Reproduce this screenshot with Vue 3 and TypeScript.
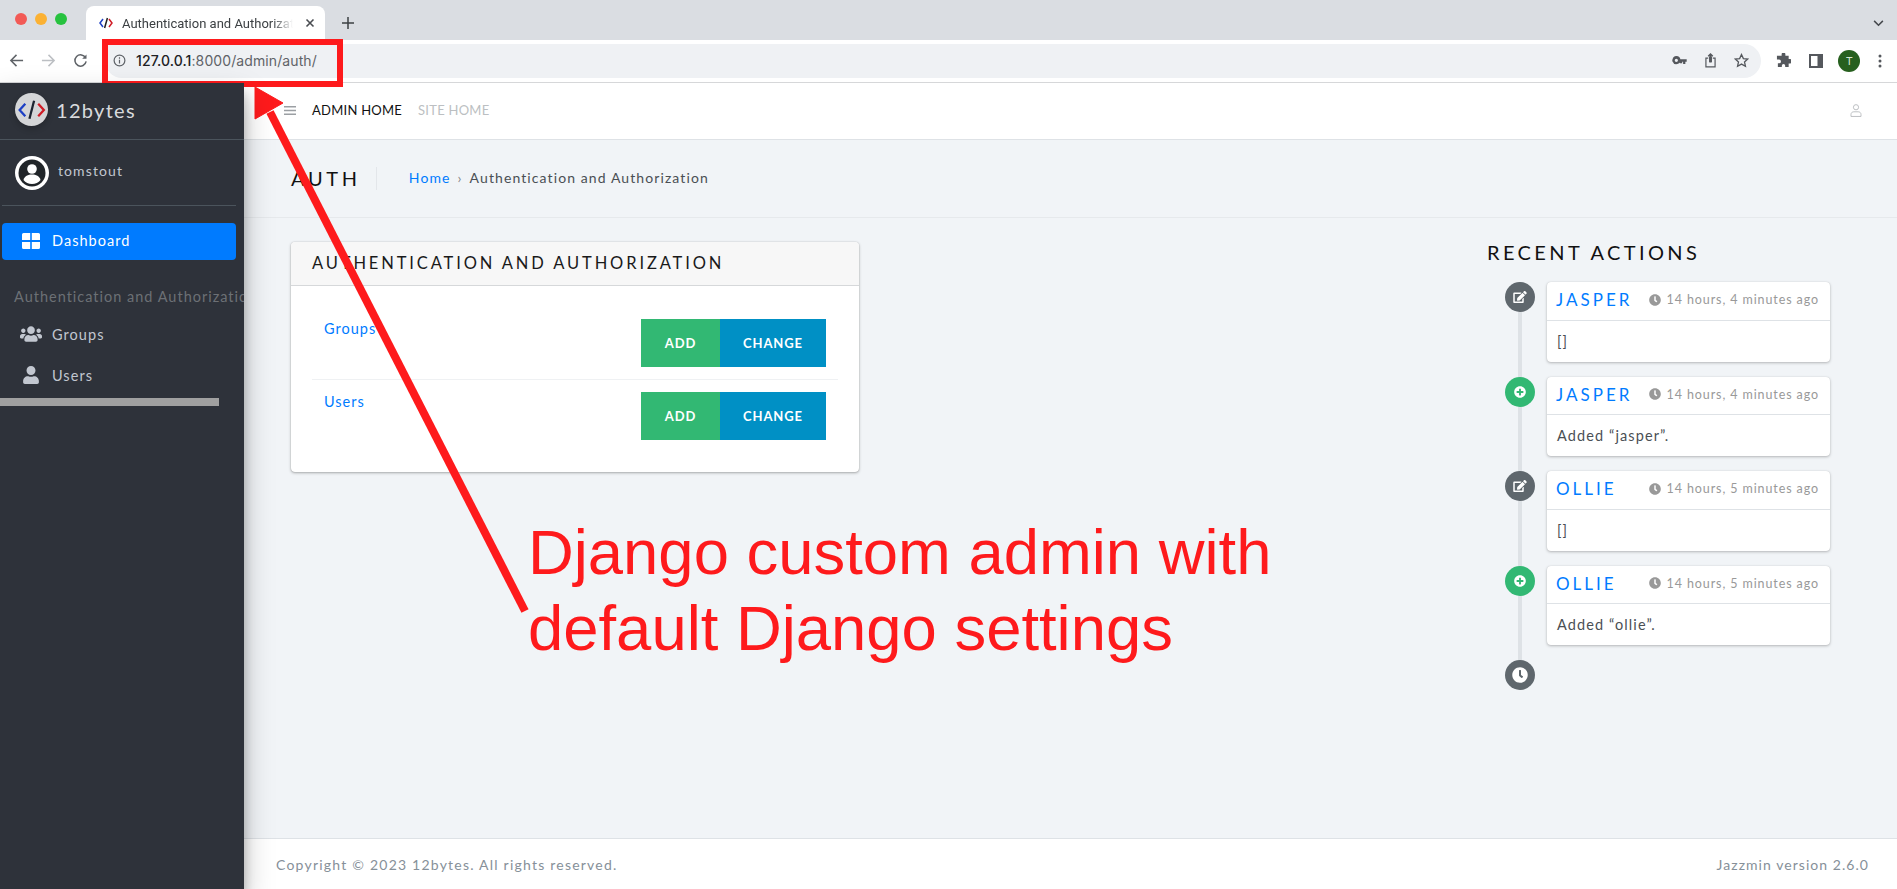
<script setup lang="ts">
interface Action { name: string; time: string; body: string; kind: 'edit' | 'add' }
const actions: Action[] = [
  { name: 'JASPER', time: '14 hours, 4 minutes ago', body: '[]', kind: 'edit' },
  { name: 'JASPER', time: '14 hours, 4 minutes ago', body: 'Added “jasper”.', kind: 'add' },
  { name: 'OLLIE', time: '14 hours, 5 minutes ago', body: '[]', kind: 'edit' },
  { name: 'OLLIE', time: '14 hours, 5 minutes ago', body: 'Added “ollie”.', kind: 'add' },
]
const models: string[] = ['Groups', 'Users']
const clock = 'M256,8C119,8,8,119,8,256S119,504,256,504,504,393,504,256,393,8,256,8Zm92.49,313h0l-20,25a16,16,0,0,1-22.49,2.5h0l-67-49.72a40,40,0,0,1-15-31.23V112a16,16,0,0,1,16-16h32a16,16,0,0,1,16,16V256l58,42.5A16,16,0,0,1,348.49,321Z'
const edit = 'M402.6 83.2l90.2 90.2c3.8 3.8 3.8 10 0 13.8L274.4 405.6l-92.8 10.3c-12.4 1.4-22.9-9.1-21.5-21.5l10.3-92.8L388.8 83.2c3.8-3.8 10-3.8 13.8 0zm162-22.9l-48.8-48.8c-15.2-15.2-39.9-15.2-55.2 0l-35.4 35.4c-3.8 3.8-3.8 10 0 13.8l90.2 90.2c3.8 3.8 10 3.8 13.8 0l35.4-35.4c15.2-15.3 15.2-40 0-55.2zM384 346.2V448H64V128h229.8c3.2 0 6.2-1.3 8.5-3.5l40-40c7.6-7.6 2.2-20.5-8.5-20.5H48C21.5 64 0 85.5 0 112v352c0 26.5 21.5 48 48 48h352c26.5 0 48-21.5 48-48V306.2c0-10.7-12.9-16-20.5-8.5l-40 40c-2.2 2.3-3.5 5.3-3.5 8.5z'
const plus = 'M256 8C119 8 8 119 8 256s111 248 248 248 248-111 248-248S393 8 256 8zm144 276c0 6.6-5.4 12-12 12h-92v92c0 6.6-5.4 12-12 12h-56c-6.6 0-12-5.4-12-12v-92h-92c-6.6 0-12-5.4-12-12v-56c0-6.6 5.4-12 12-12h92v-92c0-6.6 5.4-12 12-12h56c6.6 0 12 5.4 12 12v92h92c6.6 0 12 5.4 12 12v56z'
</script>

<template>
  <div class="page">
    <div class="tabstrip">
      <div class="lights">
        <span class="light red"></span><span class="light amber"></span><span class="light green"></span>
      </div>
      <div class="tab">
        <svg class="favicon" viewBox="0 0 14 14" width="14" height="14" fill="none" stroke-width="1.5">
          <path d="M4 3 1 7l3 4" stroke="#1c3fc4" />
          <path d="M8.400 2 5.600 12" stroke="#222" />
          <path d="m10 3 3 4-3 4" stroke="#d01c26" />
        </svg>
        <span class="tab-title">Authentication and Authorization</span>
        <svg class="tab-close" viewBox="0 0 10 10" width="10" height="10" stroke="#4a4d52" stroke-width="1.6">
          <path d="m1.500 1.500 7 7m0-7-7 7" />
        </svg>
      </div>
      <svg class="newtab" viewBox="0 0 12 12" width="12" height="12" stroke="#3c4043" stroke-width="1.5">
        <path d="M6 0v12M0 6h12" />
      </svg>
      <svg class="chev" viewBox="0 0 12 8" width="11" height="7" fill="none" stroke="#45484d" stroke-width="1.7">
        <path d="m1 1 5 5 5-5" />
      </svg>
    </div>

    <div class="toolbar">
      <svg class="nav-ic" viewBox="0 0 16 16" width="15" height="15" fill="none" stroke="#5f6368" stroke-width="1.6">
        <path d="M15 8H2M8 2 2 8l6 6" />
      </svg>
      <svg class="nav-ic" viewBox="0 0 16 16" width="15" height="15" fill="none" stroke="#bcbfc3" stroke-width="1.6">
        <path d="M1 8h13M8 2l6 6-6 6" />
      </svg>
      <svg class="nav-ic" viewBox="0 0 16 16" width="15" height="15" fill="none" stroke="#5f6368" stroke-width="1.6">
        <path d="M13.400 5.200A6 6 0 1 0 14 9" />
        <path d="M14.400 1.600v4.600H9.800" fill="#5f6368" stroke="none" />
      </svg>
      <div class="omnibox">
        <svg viewBox="0 0 14 14" width="13" height="13" fill="none" stroke="#5f6368" stroke-width="1.3">
          <circle cx="7" cy="7" r="5.800" />
          <path d="M7 6.200v4M7 3.600v1.400" />
        </svg>
        <span class="url"><b>127.0.0.1</b>:8000/admin/auth/</span>
        <div class="omni-right">
          <svg viewBox="0 0 16 10" width="15" height="9" fill="#55585d">
            <path d="M4.500 0a4.500 4.500 0 1 1-4.200 6H0V4h.3A4.500 4.500 0 0 1 4.500 0Zm0 3a1.800 1.800 0 1 0 0 3.600 1.800 1.800 0 0 0 0-3.600ZM8 3.500h8v3h-1.500V9H12V6.500h-1V8H8.500Z" />
          </svg>
          <svg viewBox="0 0 12 16" width="11" height="15" fill="none" stroke="#55585d" stroke-width="1.3">
            <path d="M3.500 5.500H1v9.500h10V5.500H8.500" />
            <path d="M6 10V1M3.500 3.400 6 1l2.500 2.400" stroke-width="1.6" />
            <path d="M4.400 3.500h3.200V10H4.400Z" fill="#55585d" stroke="none" />
          </svg>
          <svg viewBox="0 0 16 16" width="15" height="15" fill="none" stroke="#55585d" stroke-width="1.4">
            <path d="m8 1.600 2 4.300 4.600.5-3.400 3.100 1 4.600L8 11.800l-4.200 2.300 1-4.600L1.400 6.400 6 5.900Z" />
          </svg>
        </div>
      </div>
      <div class="browser-right">
        <svg viewBox="0 0 16 16" width="15" height="15" fill="#55585d">
          <path d="M6 1.500a2 2 0 0 1 4 0V3h3.500v3.500H15a2.300 2.300 0 0 1 0 4.600h-1.500V15H9.800v-1.500a1.800 1.800 0 0 0-3.600 0V15H2v-4h1.300a2 2 0 0 0 0-4H1V3h5Z" />
        </svg>
        <svg viewBox="0 0 14 14" width="14" height="14" fill="none" stroke="#55585d">
          <path d="M0 0h14v14H0Z" fill="#55585d" stroke="none" />
          <path d="M2 2h6.500v10H2Z" fill="#fff" stroke="none" />
        </svg>
        <span class="avatar">T</span>
        <svg viewBox="0 0 4 14" width="4" height="14" fill="#55585d">
          <circle cx="2" cy="2" r="1.500" /><circle cx="2" cy="7" r="1.500" /><circle cx="2" cy="12" r="1.500" />
        </svg>
      </div>
    </div>

    <div class="app">
      <aside class="sidebar">
        <div class="brand">
          <span class="brand-logo">
            <svg viewBox="0 0 32 32" width="33" height="33" fill="none" stroke-width="2.200">
              <path d="M10 10.500 4.500 16.500l5.500 6" stroke="#1c3fc4" />
              <path d="M18.500 7.500 14 25" stroke="#1c2430" />
              <path d="m22.500 10.500 5.500 6-5.500 6" stroke="#d01c26" />
            </svg>
          </span>
          <span class="brand-text">12bytes</span>
        </div>
        <div class="user-panel">
          <svg class="user-pic" viewBox="0 0 34 34" width="34" height="34">
            <circle cx="17" cy="17" r="17" fill="#fff" />
            <circle cx="17" cy="17" r="13.500" fill="#212529" />
            <circle cx="17" cy="13" r="4.800" fill="#fff" />
            <path d="M8.500 24c1-4 4.500-5.500 8.500-5.500s7.500 1.500 8.500 5.500c-2 2.500-5 4-8.500 4s-6.500-1.500-8.500-4Z" fill="#fff" />
          </svg>
          <span class="user-name">tomstout</span>
        </div>
        <nav class="side-nav">
          <a class="side-link active">
            <svg class="ic-dash" viewBox="0 0 18 16" width="18" height="16" fill="#fff">
              <path d="M0 1.500A1.500 1.500 0 0 1 1.500 0h6.700v7H0ZM9.800 0h6.700A1.500 1.500 0 0 1 18 1.500V7H9.800ZM0 9h8.200v7H1.500A1.500 1.500 0 0 1 0 14.500ZM9.800 9H18v5.500a1.500 1.500 0 0 1-1.500 1.500H9.800Z" />
            </svg>
            <span>Dashboard</span>
          </a>
          <div class="side-head">Authentication and Authorization</div>
          <a class="side-link">
            <svg class="ic-side" viewBox="0 0 640 512" width="22" height="18" fill="#c2c7d0">
              <path d="M96 224c35.300 0 64-28.700 64-64s-28.700-64-64-64-64 28.700-64 64 28.700 64 64 64zm448 0c35.300 0 64-28.700 64-64s-28.700-64-64-64-64 28.700-64 64 28.700 64 64 64zm32 32h-64c-17.600 0-33.500 7.100-45.100 18.600 40.300 22.100 68.900 62 75.100 109.400h66c17.700 0 32-14.300 32-32v-32c0-35.300-28.700-64-64-64zm-256 0c61.900 0 112-50.100 112-112S381.900 32 320 32 208 82.100 208 144s50.100 112 112 112zm76.800 32h-8.300c-20.800 10-43.900 16-68.500 16s-47.600-6-68.500-16h-8.300C179.600 288 128 339.600 128 403.200V432c0 26.500 21.500 48 48 48h288c26.500 0 48-21.500 48-48v-28.800c0-63.600-51.600-115.200-115.200-115.200zm-223.700-13.400C161.500 263.100 145.600 256 128 256H64c-35.300 0-64 28.700-64 64v32c0 17.700 14.300 32 32 32h65.900c6.300-47.400 34.900-87.300 75.200-109.400z" />
            </svg>
            <span>Groups</span>
          </a>
          <a class="side-link">
            <svg class="ic-side" viewBox="0 0 448 512" width="22" height="18" fill="#c2c7d0">
              <path d="M224 256c70.700 0 128-57.300 128-128S294.700 0 224 0 96 57.300 96 128s57.300 128 128 128zm89.600 32h-16.700c-22.200 10.200-46.900 16-72.900 16s-50.600-5.800-72.900-16h-16.700C60.200 288 0 348.200 0 422.400V464c0 26.500 21.500 48 48 48h352c26.500 0 48-21.500 48-48v-41.600c0-74.200-60.200-134.400-134.400-134.400z" />
            </svg>
            <span>Users</span>
          </a>
        </nav>
        <div class="side-scroll"></div>
      </aside>

      <div class="main">
        <header class="topnav">
          <svg viewBox="0 0 12 9" width="12" height="9" fill="#9b9fa3">
            <path d="M0 0h12v1.500H0ZM0 3.700h12v1.500H0ZM0 7.400h12v1.500H0Z" />
          </svg>
          <a class="top-link current">ADMIN HOME</a>
          <a class="top-link">SITE HOME</a>
          <svg class="top-user" viewBox="0 0 12 14" width="12" height="13" fill="none" stroke="#b8bbbe" stroke-width="1">
            <circle cx="6" cy="3.500" r="2.800" />
            <path d="M.6 13.400v-2c0-2 1.400-3 3-3h4.800c1.600 0 3 1 3 3v2Z" />
          </svg>
        </header>

        <div class="content-head">
          <h1>AUTH</h1>
          <div class="crumbs">
            <a>Home</a><span class="sep">›</span><span>Authentication and Authorization</span>
          </div>
        </div>

        <div class="content">
          <section class="card">
            <h2>AUTHENTICATION AND AUTHORIZATION</h2>
            <div class="card-body">
              <div v-for="m in models" :key="m" class="model-row">
                <a class="model-link">{{ m }}</a>
                <div class="btns">
                  <a class="btn add">ADD</a>
                  <a class="btn change">CHANGE</a>
                </div>
              </div>
            </div>
          </section>

          <section class="recent">
            <h3>RECENT ACTIONS</h3>
            <div class="timeline">
              <div v-for="(a, i) in actions" :key="i" class="tl-item">
                <span class="dot" :class="a.kind">
                  <svg v-if="a.kind === 'edit'" viewBox="0 0 576 512" width="14" height="12" fill="#fff"><path :d="edit" /></svg>
                  <svg v-else viewBox="0 0 512 512" width="12" height="12" fill="#fff"><path :d="plus" /></svg>
                </span>
                <div class="tl-card">
                  <div class="tl-head">
                    <a class="tl-name">{{ a.name }}</a>
                    <span class="tl-time">
                      <svg viewBox="0 0 512 512" width="12" height="12" fill="#999"><path :d="clock" /></svg>
                      {{ a.time }}
                    </span>
                  </div>
                  <div class="tl-body">{{ a.body }}</div>
                </div>
              </div>
              <div class="tl-item last">
                <span class="dot edit">
                  <svg viewBox="0 0 512 512" width="16" height="16" fill="#fff"><path :d="clock" /></svg>
                </span>
              </div>
            </div>
          </section>
        </div>

        <footer class="footer">
          <span class="copyright">Copyright © 2023 12bytes. All rights reserved.</span>
          <span class="version">Jazzmin version 2.6.0</span>
        </footer>
      </div>
    </div>

    <div class="red-box"></div>
    <svg class="arrow" viewBox="0 0 1897 889" width="1897" height="889">
      <path d="M270 112 525 611" stroke="#fe1a1c" stroke-width="8" fill="none" />
      <path d="M255 87V119L283 103Z" fill="#fe1a1c" stroke="#fe1a1c" stroke-width="1" />
    </svg>
    <div class="note">Django custom admin with<br />default Django settings</div>
  </div>
</template>

<style>
html, body { margin: 0; padding: 0; background: #fff; }
</style>

<style scoped>
.page {
  position: relative;
  width: 1897px;
  height: 889px;
  overflow: hidden;
  display: flex;
  flex-direction: column;
  font-family: Lato, "Noto Sans", sans-serif;
}
a { cursor: pointer; }
h1, h2, h3 { margin: 0; font-weight: 400; }

.tabstrip {
  height: 40px;
  flex: none;
  background: #dadde2;
  display: flex;
  align-items: flex-end;
  font-family: Inter, sans-serif;
}
.lights { display: flex; gap: 8px; padding: 0 0 15px 15px; width: 86px; box-sizing: border-box; }
.light { width: 12px; height: 12px; border-radius: 50%; flex: none; }
.red { background: #f25a56; }
.amber { background: #fbb133; }
.green { background: #27c23f; }
.tab {
  width: 239px;
  height: 34px;
  background: #fff;
  border-radius: 8px 8px 0 0;
  display: flex;
  align-items: center;
  padding: 0 10px 0 13px;
  box-sizing: border-box;
  gap: 9px;
}
.favicon { flex: none; }
.tab-title {
  flex: 1;
  min-width: 0;
  font-family: Roboto, sans-serif;
  font-size: 13px;
  color: #3c4043;
  white-space: nowrap;
  overflow: hidden;
  -webkit-mask-image: linear-gradient(90deg, #000 88%, transparent);
  mask-image: linear-gradient(90deg, #000 88%, transparent);
}
.tab-close { margin-left: 3px; flex: none; }
.newtab { margin: 0 0 11px 17px; }
.chev { margin: 0 13px 13px auto; }

.toolbar {
  height: 43px;
  flex: none;
  box-sizing: border-box;
  background: #fff;
  border-bottom: 1px solid #d6d7d9;
  display: flex;
  align-items: center;
  padding: 0 15px 1px 9px;
  font-family: Inter, sans-serif;
}
.nav-ic { margin-right: 17px; flex: none; }
.omnibox {
  width: 1656px;
  height: 34px;
  box-sizing: border-box;
  background: #eff1f4;
  border-radius: 0 17px 17px 17px;
  display: flex;
  align-items: center;
  padding: 0 12px 0 8px;
  gap: 10px;
}
.url { font-size: 14px; letter-spacing: .1px; color: #5f6368; }
.url b { font-weight: 500; color: #202124; }
.omni-right { margin-left: auto; display: flex; align-items: center; gap: 18px; }
.browser-right { flex: 1; display: flex; align-items: center; justify-content: space-between; padding-left: 15px; }
.avatar {
  width: 22px;
  height: 22px;
  border-radius: 50%;
  background: #27601f;
  color: #d8e8d4;
  font-size: 11px;
  display: flex;
  align-items: center;
  justify-content: center;
  margin-left: -2px;
}

.app { flex: 1; display: flex; min-height: 0; }

.sidebar {
  width: 244px;
  flex: none;
  background: #2e323a;
  position: relative;
  z-index: 1;
  box-shadow: 0 14px 28px rgba(0, 0, 0, .25), 0 10px 10px rgba(0, 0, 0, .22);
  overflow: hidden;
}
.brand {
  height: 57px;
  box-sizing: border-box;
  border-bottom: 1px solid #4b545c;
  display: flex;
  align-items: center;
  padding: 0 0 3px 15px;
  gap: 8px;
}
.brand-logo {
  width: 33px;
  height: 33px;
  border-radius: 50%;
  background: #d4d5d7;
  box-shadow: 0 3px 6px rgba(0, 0, 0, .2);
  display: block;
}
.brand-text { font-size: 20px; font-weight: 400; letter-spacing: 1.300px; color: #d8dadd; }
.user-panel {
  margin: 0 8px 0 2px;
  height: 66px;
  box-sizing: border-box;
  border-bottom: 1px solid #4b545c;
  display: flex;
  align-items: center;
  padding: 0 0 0 13px;
  gap: 9px;
}
.user-name { font-size: 14px; letter-spacing: 1.100px; color: #c2c7d0; padding-bottom: 4px; }
.side-nav { padding: 17px 8px 0 2px; }
.side-link {
  height: 37px;
  display: flex;
  align-items: center;
  color: #c2c7d0;
  font-size: 14.500px;
  letter-spacing: 1.050px;
  border-radius: 4px;
  margin-bottom: 4px;
}
.side-link svg { margin-top: -2px; }
.side-link .ic-dash { margin-left: 20px; margin-right: 12px; }
.side-link .ic-side { margin-left: 18px; margin-right: 10px; }
.side-link.active { background: #007bff; color: #fff; }
.side-link.active span { padding-bottom: 2px; }
.side-head {
  margin: 18px -30px 0 12px;
  height: 38px;
  line-height: 38px;
  font-size: 14.500px;
  letter-spacing: 1px;
  color: #6c7075;
  white-space: nowrap;
}
.side-scroll { width: 219px; height: 8px; background: #a0a0a0; }

.main { flex: 1; min-width: 0; display: flex; flex-direction: column; background: #f1f4f7; }
.topnav {
  height: 57px;
  flex: none;
  box-sizing: border-box;
  background: #fff;
  border-bottom: 1px solid #dee2e6;
  display: flex;
  align-items: center;
  padding: 0 35px 2px 40px;
}
.top-link { font-size: 13px; letter-spacing: .25px; color: #bcbfc2; margin-left: 16px; }
.top-link.current { color: #111; }
.top-user { margin-left: auto; }

.content-head {
  height: 78px;
  flex: none;
  box-sizing: border-box;
  border-bottom: 1px solid #e6e9ec;
  display: flex;
  align-items: center;
  padding-left: 47px;
}
.content-head h1 {
  font-size: 20px;
  letter-spacing: 3.700px;
  color: #111;
  padding-right: 15px;
  height: 23px;
  line-height: 23px;
  border-right: 1px solid #e3e6ea;
}
.crumbs { padding: 0 0 2px 32px; font-size: 14px; letter-spacing: 1.100px; color: #4a4f54; }
.crumbs a { color: #007bff; }
.sep { margin: 0 7px; color: #888; }

.content { flex: 1; display: flex; justify-content: space-between; align-items: flex-start; padding: 24px 67px 0 47px; }
.card {
  width: 568px;
  box-sizing: border-box;
  background: #fff;
  border-radius: 4px;
  box-shadow: 0 0 1px rgba(0, 0, 0, .3), 0 1px 3px rgba(0, 0, 0, .3);
}
.card h2 {
  height: 44px;
  box-sizing: border-box;
  background: #f7f7f7;
  border-bottom: 1px solid #d6d8da;
  border-radius: 4px 4px 0 0;
  font-size: 16.500px;
  line-height: 42px;
  letter-spacing: 2.870px;
  color: #1a1a1a;
  padding-left: 21px;
}
.card-body { padding: 21px 21px 20px; }
.model-row { display: flex; justify-content: space-between; padding: 12px; }
.model-row + .model-row { border-top: 1px solid #eff1f3; }
.model-link { font-size: 14.500px; line-height: 20px; letter-spacing: 1px; color: #007bff; }
.btns { display: flex; }
.btn {
  height: 48px;
  display: flex;
  align-items: center;
  justify-content: center;
  color: #fff;
  font-size: 13px;
  font-weight: 700;
  letter-spacing: .9px;
}
.add { width: 79px; background: #32b873; }
.change { width: 106px; background: #0090c5; }

.recent { width: 343px; }
.recent h3 { font-size: 20px; letter-spacing: 3.400px; color: #111; line-height: 20px; margin-bottom: 20px; }
.timeline { position: relative; margin-left: 18px; }
.timeline::before {
  content: "";
  position: absolute;
  left: 13px;
  top: 0;
  bottom: 0;
  width: 4px;
  background: #dee2e6;
}
.tl-item { position: relative; display: flex; gap: 12px; margin-bottom: 15px; }
.tl-item.last { margin-bottom: 0; }
.dot {
  width: 30px;
  height: 30px;
  flex: none;
  border-radius: 50%;
  display: flex;
  align-items: center;
  justify-content: center;
}
.dot.edit { background: #5f676d; }
.dot.add { background: #32b873; }
.tl-card {
  width: 283px;
  background: #fff;
  border-radius: 4px;
  box-shadow: 0 0 1px rgba(0, 0, 0, .15), 0 1px 3px rgba(0, 0, 0, .25);
}
.tl-head {
  height: 38.500px;
  box-sizing: border-box;
  border-bottom: 1px solid #dee2e6;
  display: flex;
  align-items: center;
  padding: 0 11px 2px 9px;
}
.tl-name { font-size: 17px; letter-spacing: 3px; color: #007bff; }
.tl-time {
  margin-left: auto;
  display: flex;
  align-items: center;
  gap: 6px;
  font-size: 12.500px;
  letter-spacing: .9px;
  color: #999;
}
.tl-body {
  height: 41px;
  line-height: 41px;
  padding-left: 10px;
  font-size: 14.500px;
  letter-spacing: 1.100px;
  color: #4a4f54;
}

.footer {
  height: 51px;
  flex: none;
  box-sizing: border-box;
  background: #fff;
  border-top: 1px solid #dee2e6;
  display: flex;
  align-items: center;
  justify-content: space-between;
  padding: 0 28px 0 32px;
  font-size: 14px;
  letter-spacing: 1.050px;
  color: #869099;
}
.copyright { letter-spacing: 1.220px; }

.red-box {
  position: absolute;
  left: 102px;
  top: 39px;
  width: 241px;
  height: 48px;
  box-sizing: border-box;
  border: 6px solid #fe1a1c;
}
.arrow { position: absolute; left: 0; top: 0; pointer-events: none; }
.note {
  position: absolute;
  left: 528px;
  top: 514px;
  font-family: "Liberation Sans", Arial, sans-serif;
  font-size: 63.400px;
  line-height: 76px;
  color: #fe1a1c;
  white-space: nowrap;
}
</style>
